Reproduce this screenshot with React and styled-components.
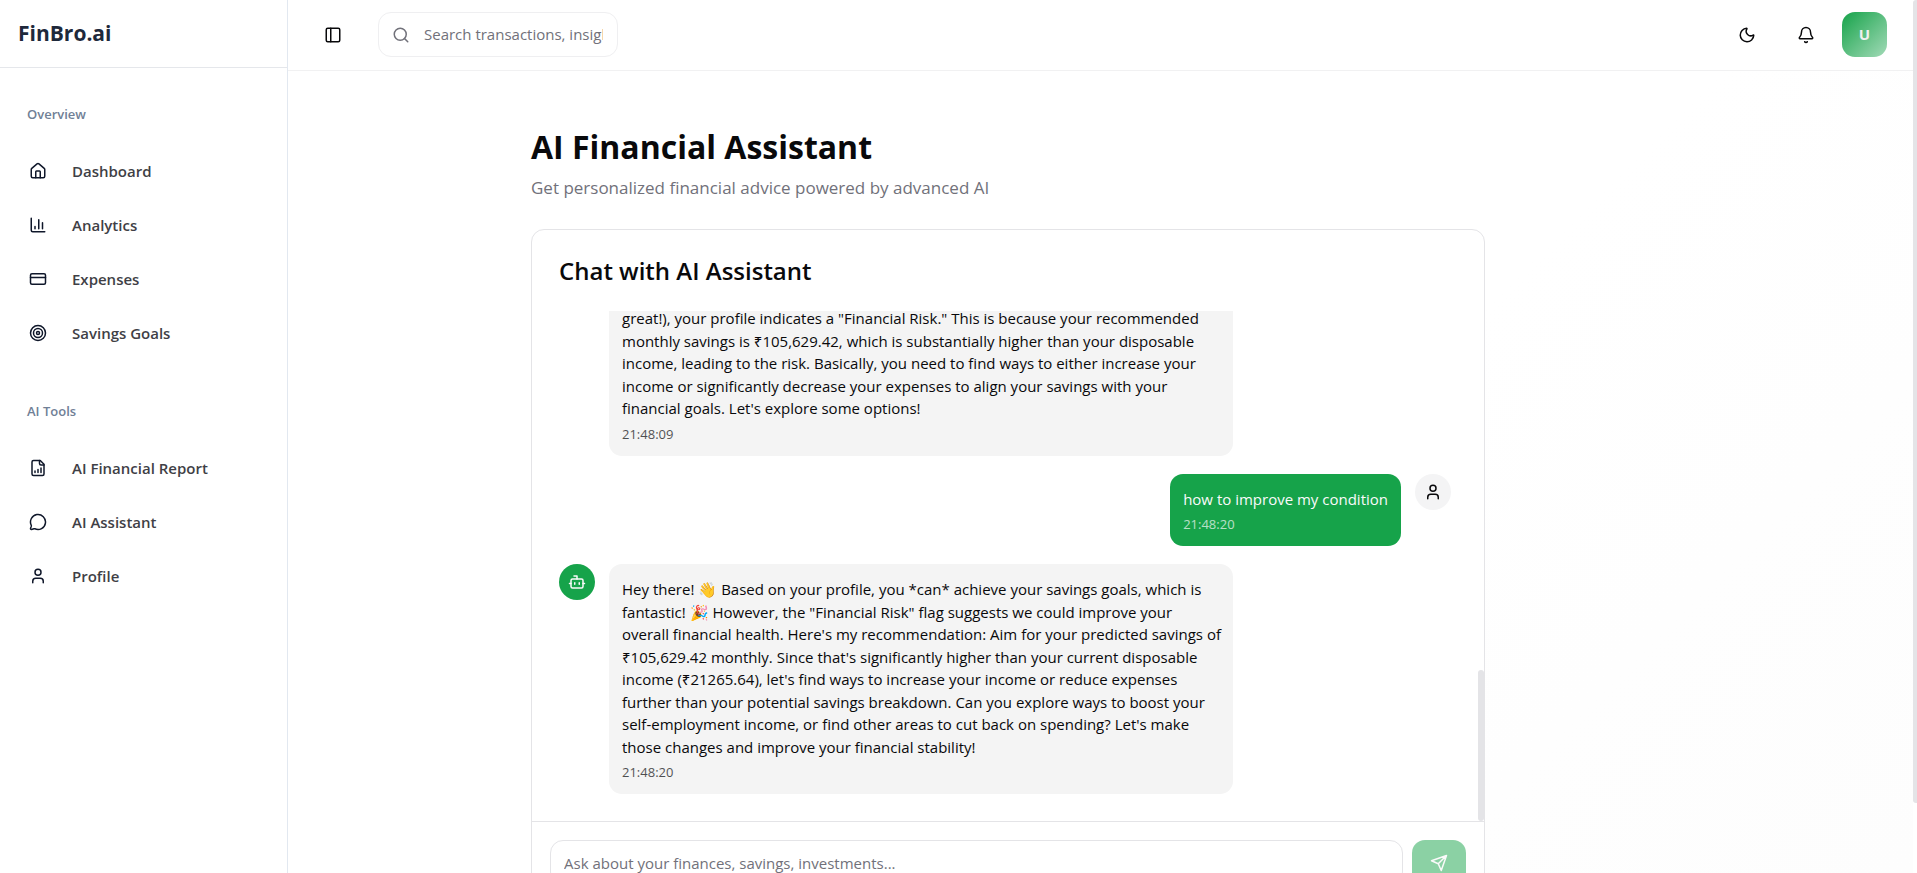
import React from "react";
import styled, { createGlobalStyle } from "styled-components";
import {
  House, CreditCard, Target, MessageCircle, User, Moon, Bell,
  Search, PanelLeft, Bot,
} from "lucide-react";

const GlobalStyle = createGlobalStyle`
  *, *::before, *::after { box-sizing: border-box; }
  body {
    margin: 0;
    font-family: "Open Sans", "Noto Sans", sans-serif;
    font-size: 15px;
    line-height: 1.5;
    color: #09090b;
    background: #fff;
  }
  button, input { font: inherit; }
  h1, h2, p, ul { margin: 0; padding: 0; }
`;

const Shell = styled.div`
  display: flex;
  height: 100vh;
  overflow: hidden;
`;

const Sidebar = styled.aside`
  flex: 0 0 288px;
  border-right: 1px solid #e2e8f0;
  background: #fff;
`;

const Brand = styled.div`
  display: flex;
  align-items: center;
  height: 68px;
  padding: 0 18px;
  border-bottom: 1px solid #e5e7eb;
  font-size: 21px;
  font-weight: 700;
  color: #1e293b;
`;

const Nav = styled.nav`
  display: flex;
  flex-direction: column;
  gap: 33px;
  padding: 28px 18px;
`;

const GroupLabel = styled.h2`
  height: 36px;
  padding: 0 9px;
  margin-bottom: 12px;
  font-size: 13px;
  line-height: 36px;
  font-weight: 600;
  color: #708096;
`;

const NavList = styled.ul`
  list-style: none;
`;

const NavLink = styled.a`
  display: flex;
  align-items: center;
  gap: 25px;
  height: 54px;
  padding: 0 11px;
  font-weight: 600;
  color: #3f3f46;
  text-decoration: none;
  svg { color: #0f172a; }
`;

const Page = styled.div`
  flex: 1;
  min-width: 0;
  background: linear-gradient(135deg, #fff 60%, #fdfdfd);
`;

const TopBar = styled.header`
  display: flex;
  align-items: center;
  justify-content: space-between;
  height: 71px;
  padding: 0 26px 1px 27px;
  border-bottom: 1px solid #f1f1f2;
  background: #fff;
`;

const BarGroup = styled.div`
  display: flex;
  align-items: center;
  gap: ${(p) => p.$gap}px;
`;

const IconButton = styled.button`
  display: grid;
  place-items: center;
  width: ${(p) => p.$size}px;
  height: ${(p) => p.$size}px;
  padding: 0;
  border: 0;
  border-radius: 12px;
  background: transparent;
  color: #09090b;
`;

const SearchBox = styled.label`
  display: flex;
  align-items: center;
  gap: 14px;
  width: 240px;
  height: 45px;
  padding: 0 14px 0 13px;
  border: 1px solid #efeff1;
  border-radius: 13px;
  color: #71717a;
  svg { flex: none; }
`;

const TextInput = styled.input`
  flex: 1;
  min-width: 0;
  padding: 0;
  border: 0;
  outline: 0;
  background: transparent;
  color: #09090b;
  &::placeholder { color: #71717a; opacity: 1; }
`;

const ProfileButton = styled.button`
  width: 45px;
  height: 45px;
  padding: 0;
  border: 0;
  border-radius: 13px;
  background: linear-gradient(135deg, #16a34a, #a2dab7);
  color: #f0f0f0;
  font-size: 15px;
  font-weight: 700;
`;

const Content = styled.main`
  max-width: 1440px;
`;

const Column = styled.div`
  max-width: 1008px;
  margin: 0 auto;
  padding: 53px 27px 27px;
`;

const Title = styled.h1`
  font-size: 32px;
  line-height: 45px;
  font-weight: 700;
`;

const Subtitle = styled.p`
  margin-top: 5px;
  margin-bottom: 28px;
  font-size: 17px;
  line-height: 27px;
  color: #71717a;
`;

const Card = styled.section`
  border: 1px solid #e4e4e7;
  border-radius: 13px;
  background: #fff;
`;

const CardTitle = styled.h2`
  padding: 27px;
  font-size: 24px;
  line-height: 27px;
  font-weight: 600;
`;

const ChatArea = styled.div`
  display: flex;
  height: 510px;
  overflow: hidden;
`;

const Messages = styled.div`
  flex: 1;
  min-width: 0;
  display: flex;
  flex-direction: column;
  justify-content: flex-end;
  gap: 18px;
  padding: 0 27px 27px;
`;

const Message = styled.article`
  display: flex;
  align-items: flex-start;
  gap: 14px;
  flex-direction: ${(p) => (p.$own ? "row-reverse" : "row")};
`;

const Avatar = styled.span`
  display: grid;
  place-items: center;
  flex: none;
  width: 36px;
  height: 36px;
  border-radius: 50%;
  visibility: ${(p) => (p.$hidden ? "hidden" : "visible")};
  background: ${(p) => (p.$own ? "#f4f4f5" : "#16a34a")};
  color: ${(p) => (p.$own ? "#09090b" : "#fafafa")};
`;

const Bubble = styled.div`
  width: ${(p) => (p.$own ? "auto" : "70%")};
  max-width: 70%;
  padding: 14px 13px 13px;
  border-radius: 13px;
  background: ${(p) => (p.$own ? "#16a34a" : "#f4f4f4")};
  color: ${(p) => (p.$own ? "#fafafa" : "#09090b")};
`;

const BubbleText = styled.p`
  white-space: pre;
`;

const Time = styled.time`
  display: block;
  margin-top: 5px;
  font-size: 13px;
  line-height: 18px;
  opacity: 0.7;
`;

const Rail = styled.div`
  display: flex;
  flex-direction: column;
  justify-content: ${(p) => (p.$end ? "flex-end" : "flex-start")};
  flex: 0 0 ${(p) => p.$width}px;
`;

const Thumb = styled.div`
  height: ${(p) => p.$length};
  border-radius: ${(p) => p.$radius};
  background: #e4e4e7;
`;

const Composer = styled.form`
  display: flex;
  gap: 9px;
  padding: 18px;
  border-top: 1px solid #e4e4e7;
`;

const ComposerInput = styled(TextInput)`
  height: 45px;
  padding: 0 13px;
  border: 1px solid #e4e4e7;
  border-radius: 13px;
`;

const SendButton = styled.button`
  display: grid;
  place-items: center;
  width: 54px;
  height: 45px;
  padding: 0;
  border: 0;
  border-radius: 13px;
  background: #8bd1a4;
  color: #fafafa;
`;

const LineIcon = styled.svg.attrs({
  width: 18,
  height: 18,
  viewBox: "0 0 24 24",
  fill: "none",
  stroke: "currentColor",
  strokeWidth: 2,
  strokeLinecap: "round",
  strokeLinejoin: "round",
  "aria-hidden": true,
})``;

const BarsIcon = () => (
  <LineIcon>
    <path d="M3 3v16a2 2 0 0 0 2 2h16M18 17V9M13 17V5M8 17v-3" />
  </LineIcon>
);

const ReportIcon = () => (
  <LineIcon>
    <path d="M15 2H6a2 2 0 0 0-2 2v16a2 2 0 0 0 2 2h12a2 2 0 0 0 2-2V7Z" />
    <path d="M14 2v4a2 2 0 0 0 2 2h4M8 18v-2M12 18v-4M16 18v-6" />
  </LineIcon>
);

const SendIcon = () => (
  <LineIcon>
    <path d="m22 2-7 20-4-9-9-4ZM22 2 11 13" />
  </LineIcon>
);

const groups = [
  {
    label: "Overview",
    items: [
      ["Dashboard", House],
      ["Analytics", BarsIcon],
      ["Expenses", CreditCard],
      ["Savings Goals", Target],
    ],
  },
  {
    label: "AI Tools",
    items: [
      ["AI Financial Report", ReportIcon],
      ["AI Assistant", MessageCircle],
      ["Profile", User],
    ],
  },
];

const messages = [
  {
    time: "21:48:09",
    continued: true,
    text: `great!), your profile indicates a "Financial Risk." This is because your recommended
monthly savings is ₹105,629.42, which is substantially higher than your disposable
income, leading to the risk. Basically, you need to find ways to either increase your
income or significantly decrease your expenses to align your savings with your
financial goals. Let's explore some options!`,
  },
  { time: "21:48:20", own: true, text: "how to improve my condition" },
  {
    time: "21:48:20",
    text: `Hey there! 👋 Based on your profile, you *can* achieve your savings goals, which is
fantastic! 🎉 However, the "Financial Risk" flag suggests we could improve your
overall financial health. Here's my recommendation: Aim for your predicted savings of
₹105,629.42 monthly. Since that's significantly higher than your current disposable
income (₹21265.64), let's find ways to increase your income or reduce expenses
further than your potential savings breakdown. Can you explore ways to boost your
self-employment income, or find other areas to cut back on spending? Let's make
those changes and improve your financial stability!`,
  },
];

export default function App() {
  return (
    <>
      <GlobalStyle />
      <Shell>
        <Sidebar>
          <Brand>FinBro.ai</Brand>
          <Nav aria-label="Main">
            {groups.map((group) => (
              <div key={group.label}>
                <GroupLabel>{group.label}</GroupLabel>
                <NavList>
                  {group.items.map(([name, Icon]) => (
                    <li key={name}>
                      <NavLink href="#">
                        <Icon size={18} />
                        {name}
                      </NavLink>
                    </li>
                  ))}
                </NavList>
              </div>
            ))}
          </Nav>
        </Sidebar>
        <Page>
          <TopBar>
            <BarGroup $gap={27}>
              <IconButton $size={36} aria-label="Toggle sidebar"><PanelLeft size={18} /></IconButton>
              <SearchBox>
                <Search size={18} />
                <TextInput type="text" aria-label="Search" placeholder="Search transactions, insights..." />
              </SearchBox>
            </BarGroup>
            <BarGroup $gap={14}>
              <IconButton $size={45} aria-label="Toggle theme"><Moon size={18} /></IconButton>
              <IconButton $size={45} aria-label="Notifications"><Bell size={18} /></IconButton>
              <ProfileButton aria-label="Account">U</ProfileButton>
            </BarGroup>
          </TopBar>
          <Content>
            <Column>
              <Title>AI Financial Assistant</Title>
              <Subtitle>Get personalized financial advice powered by advanced AI</Subtitle>
              <Card>
                <CardTitle>Chat with AI Assistant</CardTitle>
                <ChatArea>
                  <Messages>
                    {messages.map((m, i) => (
                      <Message key={i} $own={m.own}>
                        <Avatar $own={m.own} $hidden={m.continued}>
                          {m.own ? <User size={18} /> : <Bot size={18} />}
                        </Avatar>
                        <Bubble $own={m.own}>
                          <BubbleText>{m.text}</BubbleText>
                          <Time>{m.time}</Time>
                        </Bubble>
                      </Message>
                    ))}
                  </Messages>
                  <Rail $width={6} $end aria-hidden="true">
                    <Thumb $length="151px" $radius="3px" />
                  </Rail>
                </ChatArea>
                <Composer>
                  <ComposerInput type="text" aria-label="Message" placeholder="Ask about your finances, savings, investments..." />
                  <SendButton type="button" aria-label="Send"><SendIcon /></SendButton>
                </Composer>
              </Card>
            </Column>
          </Content>
        </Page>
        <Rail $width={4} aria-hidden="true">
          <Thumb $length="92%" $radius="3px 0 0 3px" />
        </Rail>
      </Shell>
    </>
  );
}
